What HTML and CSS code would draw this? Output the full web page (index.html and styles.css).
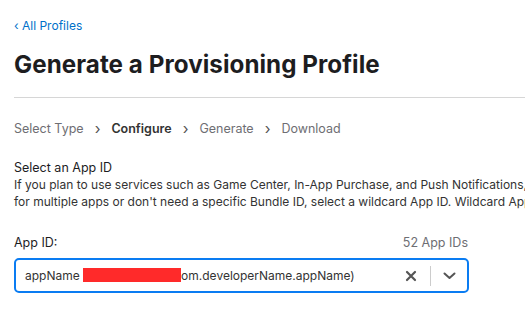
FILE: index.html
```html
<!DOCTYPE html>
<html lang="en">
<head>
  <meta charset="UTF-8">
  <meta name="viewport" content="width=device-width, initial-scale=1.0">
  <title>Generate a Provisioning Profile</title>
  <link rel="stylesheet" href="styles.css">
</head>
<body>
  <div class="page">
    <a class="back-link" href="#">&lsaquo; All Profiles</a>
    <h1>Generate a Provisioning Profile</h1>

    <div class="steps">
      <span class="step">Select Type</span>
      <span class="sep">&rsaquo;</span>
      <span class="step current">Configure</span>
      <span class="sep">&rsaquo;</span>
      <span class="step">Generate</span>
      <span class="sep">&rsaquo;</span>
      <span class="step">Download</span>
    </div>

    <div class="section">
      <div class="section-title">Select an App ID</div>
      <p class="section-text">If you plan to use services such as Game Center, In-App Purchase, and Push Notifications,<br>for multiple apps or don't need a specific Bundle ID, select a wildcard App ID. Wildcard App</p>
    </div>

    <div class="field">
      <div class="field-head">
        <label>App ID:</label>
        <span class="count">52 App IDs</span>
      </div>
      <div class="select">
        <span class="value">appName <span class="redact"></span>om.developerName.appName)</span>
        <span class="clear">
          <svg width="12" height="12" viewBox="0 0 12 12"><path d="M2 2 L10 10 M10 2 L2 10" stroke="#555" stroke-width="2.2" stroke-linecap="round"/></svg>
        </span>
        <span class="divider"></span>
        <span class="arrow">
          <svg width="13" height="8" viewBox="0 0 13 8"><path d="M1.5 1.5 L6.5 6 L11.5 1.5" fill="none" stroke="#555" stroke-width="2" stroke-linecap="round" stroke-linejoin="round"/></svg>
        </span>
      </div>
    </div>
  </div>
</body>
</html>
```

FILE: styles.css
```css
body {
  margin: 0;
  background-color: #fff;
  font-family: 'Inter', 'Helvetica Neue', sans-serif;
  color: #1d1d1f;
  overflow: hidden;
}

.page {
  padding: 18px 0 0 14px;
}

.back-link {
  display: block;
  color: #0070c9;
  font-size: 12px;
  text-decoration: none;
  line-height: 16px;
}

h1 {
  font-size: 24.2px;
  font-weight: 700;
  letter-spacing: 0.05px;
  margin: 17px 0 0 0;
  line-height: 28px;
  padding-bottom: 18px;
  border-bottom: 1px solid #d6d6d6;
  white-space: nowrap;
}

.steps {
  margin-top: 23px;
  font-size: 12.5px;
  color: #6e6e73;
  display: flex;
  align-items: center;
  gap: 11px;
  line-height: 16px;
}

.step.current {
  color: #333;
  font-weight: 600;
}

.sep {
  font-size: 15px;
  color: #555;
}

.section {
  margin-top: 22px;
  font-size: 12px;
  line-height: 17px;
}

.section-title {
  font-size: 12.5px;
  color: #1d1d1f;
}

.section-text {
  margin: 0;
  white-space: nowrap;
  color: #333;
}

.field {
  margin-top: 25px;
  width: 455px;
}

.field-head {
  display: flex;
  justify-content: space-between;
  align-items: flex-end;
  font-size: 12.5px;
  line-height: 16px;
}

.count {
  color: #6e6e73;
  padding-right: 1px;
}

.select {
  margin-top: 7px;
  height: 31px;
  border: 2px solid #0a7cf2;
  border-radius: 5px;
  display: flex;
  align-items: center;
  font-size: 12px;
  color: #333;
}

.value {
  flex: 1;
  padding-left: 9px;
  white-space: nowrap;
}

.redact {
  display: inline-block;
  width: 98px;
  height: 14px;
  background-color: #ff2a2a;
  vertical-align: -2px;
}

.clear {
  display: flex;
  padding: 0 13px 0 12px;
}

.divider {
  width: 1px;
  height: 20px;
  background-color: #ccc;
}

.arrow {
  display: flex;
  padding: 0 11px 0 12px;
}
```
